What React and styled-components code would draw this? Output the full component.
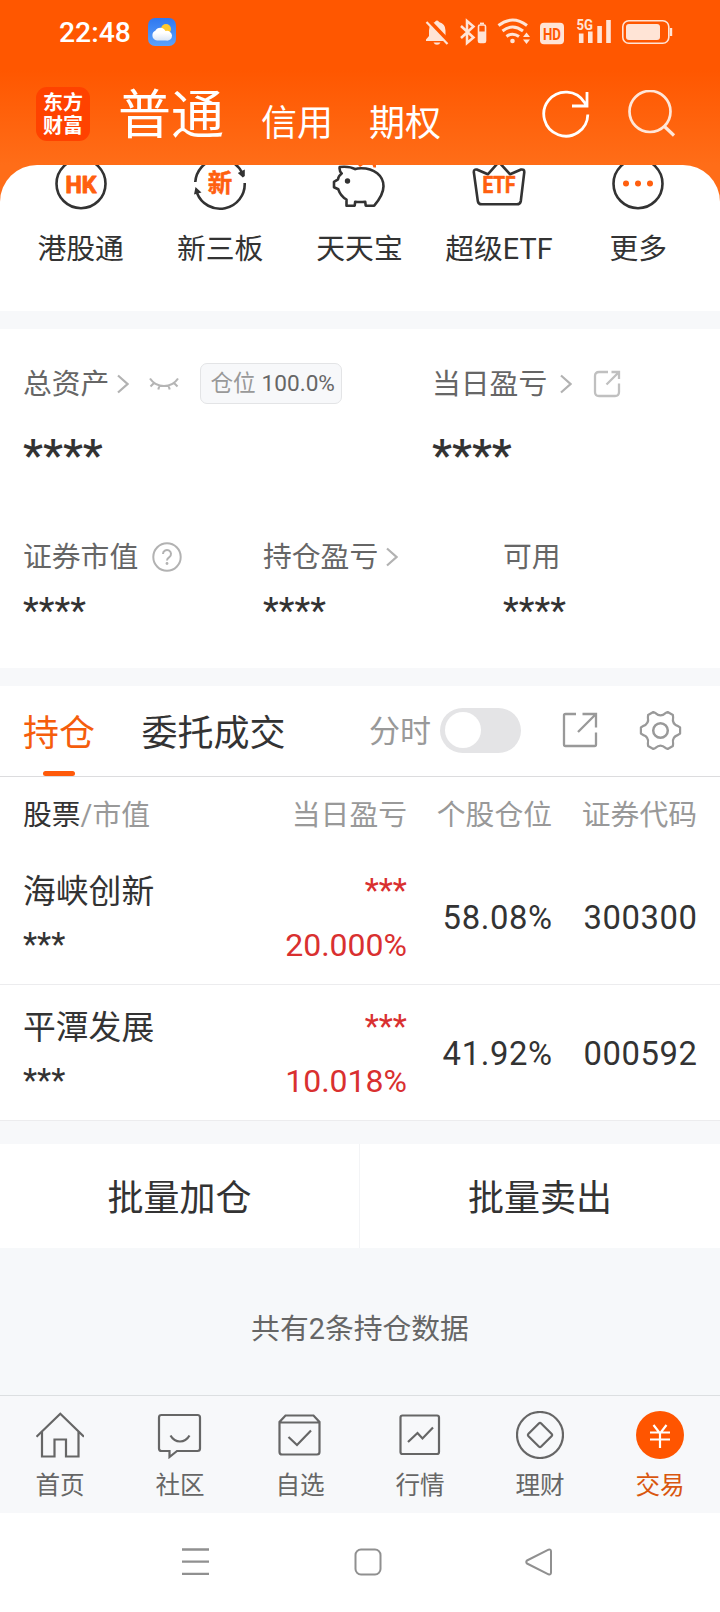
import React from "react";
import styled, { createGlobalStyle } from "styled-components";

const GlobalStyle = createGlobalStyle`
  *, *::before, *::after { box-sizing: border-box; }
  body {
    margin: 0;
    background: #fff;
    color: #333;
    font-family: Roboto, "Noto Sans CJK SC", sans-serif;
  }
  svg { display: block; flex: none; }
`;

const Screen = styled.div`
  width: 720px;
  height: 1612px;
  display: flex;
  flex-direction: column;
  overflow: hidden;
`;

/* ---------- header ---------- */

const Header = styled.header`
  height: 165px;
  flex: none;
  color: #fff;
  background: linear-gradient(#ff5700 0, #ff5700 70px, #ff6d18 165px);
`;

const StatusBar = styled.div`
  height: 64px;
  padding: 0 47px 0 59px;
  display: flex;
  align-items: center;
`;

const Clock = styled.span`
  width: 89px;
  padding-top: 1px;
  font-size: 28.3px;
  line-height: 40px;
  font-weight: 500;
`;

const StatusIcons = styled.div`
  margin-left: auto;
`;

const TitleBar = styled.div`
  height: 101px;
  padding: 0 44px 0 36px;
  display: flex;
  align-items: flex-start;
`;

const Logo = styled.div`
  width: 54px;
  height: 54px;
  margin-top: 23px;
  padding-top: 5px;
  border-radius: 11px;
  background: #ff4200;
  font-size: 20px;
  line-height: 23px;
  font-weight: 700;
  text-align: center;
`;

const AccountTab = styled.span`
  margin-left: ${(p) => p.$gap}px;
  margin-top: ${(p) => (p.$active ? 22 : 40)}px;
  font-size: ${(p) => (p.$active ? 53 : 36)}px;
  line-height: ${(p) => (p.$active ? 60 : 40)}px;
  font-weight: 400;
`;

const HeaderActions = styled.div`
  margin: 26px 0 0 auto;
  display: flex;
  gap: 37px;
`;

/* ---------- shortcuts ---------- */

const Backdrop = styled.div`
  flex: none;
  background: linear-gradient(#ff6d18 40px, #fff 40px);
`;

const Shortcuts = styled.section`
  height: 146px;
  padding: 0 12px 0 11px;
  border-radius: 37px 37px 0 0;
  overflow: hidden;
  background: #fff;
  display: grid;
  grid-template-columns: repeat(5, 1fr);
`;

const Shortcut = styled.div`
  display: flex;
  flex-direction: column;
  align-items: center;
  margin-top: -9px;
`;

const ShortcutLabel = styled.span`
  margin-top: 17px;
  font-size: 28.8px;
  line-height: 40px;
  white-space: nowrap;
`;

const Gap = styled.div`
  flex: none;
  height: ${(p) => p.$size}px;
  background: #f7f8fa;
`;

/* ---------- assets ---------- */

const Assets = styled.section`
  flex: none;
  height: 339px;
  padding: 34px 0 0 23px;
`;

const Totals = styled.div`
  display: grid;
  grid-template-columns: 409px 1fr;
  height: 173px;
`;

const Details = styled.div`
  display: grid;
  grid-template-columns: 240px 240px 1fr;
`;

const LabelLine = styled.div`
  display: flex;
  align-items: center;
  height: 41px;
  font-size: 28.8px;
  line-height: 41px;
  color: #666;
  white-space: nowrap;
`;

const Label = styled.span`
  padding-top: 2px;
`;

const Spacer = styled.span`
  flex: none;
  width: ${(p) => p.$w}px;
`;

const Masked = styled.div`
  margin-top: ${(p) => (p.$large ? 32 : 14)}px;
  font-size: ${(p) => (p.$large ? 45 : 36.5)}px;
  line-height: 40px;
  font-weight: ${(p) => (p.$large ? 500 : 400)};
  color: #333;
`;

const PositionTag = styled.span`
  width: 142px;
  height: 41px;
  padding-left: 9px;
  border: 1px solid #e3e4e6;
  border-radius: 7px;
  background: #f7f8fa;
  display: flex;
  gap: 6px;
  font-size: 22.6px;
  line-height: 40px;
  color: #999;
`;

const TagValue = styled.span`
  color: #666;
`;

/* ---------- holdings ---------- */

const Tabs = styled.nav`
  flex: none;
  height: 91px;
  padding: 0 38px 2px 23px;
  border-bottom: 1px solid #dcdcde;
  display: flex;
  align-items: center;
`;

const Tab = styled.div`
  align-self: flex-start;
  height: 90px;
  margin-right: 46.5px;
  padding-top: 28px;
  display: flex;
  flex-direction: column;
  align-items: center;
  font-size: 36px;
  line-height: 40px;
  color: ${(p) => (p.$active ? "#f55d0c" : "#333")};
  &::after {
    content: "";
    width: 32px;
    height: 5px;
    margin-top: 17px;
    border-radius: 3px;
    background: ${(p) => (p.$active ? "#ff5a0a" : "transparent")};
  }
`;

const ToggleLabel = styled.span`
  margin-left: auto;
  margin-right: 9px;
  padding-top: 4px;
  font-size: 31px;
  line-height: 40px;
  color: #999;
`;

const Toggle = styled.span`
  width: 81px;
  height: 45px;
  padding: 4.5px;
  border-radius: 23px;
  background: #e4e4e6;
  &::before {
    content: "";
    display: block;
    width: 36px;
    height: 36px;
    border-radius: 50%;
    background: #fff;
  }
`;

const tableColumns = `
  padding: 0 23px;
  display: grid;
  grid-template-columns: 1fr 160px 145px 145px;
`;

const TableHead = styled.div`
  flex: none;
  height: 72px;
  ${tableColumns}
  padding-top: 3px;
  align-items: center;
  font-size: 28.8px;
  line-height: 40px;
  color: #999;
`;

const HeadCell = styled.span`
  text-align: ${(p) => (p.$left ? "left" : "right")};
  white-space: nowrap;
`;

const Strong = styled.span`
  color: #333;
`;

const Holding = styled.div`
  flex: none;
  height: 136px;
  ${tableColumns}
  border-bottom: 1px solid #ececee;
  font-size: 32.8px;
`;

const Stack = styled.div`
  padding-top: 15px;
  line-height: 54px;
  text-align: ${(p) => (p.$rise ? "right" : "left")};
  color: ${(p) => (p.$rise ? "#d93030" : "#333")};
`;

const StockName = styled.div`
  padding-top: 1px;
  margin-bottom: -1px;
`;

const Percent = styled.div`
  font-size: 32px;
`;

const Figure = styled.div`
  line-height: 138px;
  text-align: right;
  letter-spacing: 0.6px;
  margin-right: -0.6px;
`;

const Batch = styled.div`
  flex: none;
  height: 104px;
  display: grid;
  grid-template-columns: 359px 1fr;
`;

const BatchButton = styled.div`
  border-left: ${(p) => (p.$divided ? "1px solid #f3f4f6" : "none")};
  font-size: 36px;
  line-height: 110px;
  text-align: center;
`;

const Summary = styled.div`
  flex: none;
  height: 147px;
  padding-top: 61px;
  background: #f6f8fa;
  font-size: 28.8px;
  line-height: 40px;
  text-align: center;
  color: #666;
`;

/* ---------- bottom bars ---------- */

const TabBar = styled.nav`
  flex: none;
  height: 118px;
  border-top: 1px solid #dcdfe1;
  background: #f7f8fa;
  display: grid;
  grid-template-columns: repeat(6, 1fr);
`;

const TabBarItem = styled.div`
  padding-top: 15px;
  display: flex;
  flex-direction: column;
  align-items: center;
  gap: 10px;
  font-size: 24.6px;
  line-height: 34px;
  color: ${(p) => (p.$active ? "#d9570f" : "#666")};
`;

const SystemNav = styled.div`
  flex: none;
  height: 99px;
  padding: 0 167px 2px 181px;
  display: flex;
  align-items: center;
  justify-content: space-between;
`;

/* ---------- drawings ---------- */

const WeatherIcon = () => (
  <svg width="28" height="28" viewBox="0 0 28 28">
    <defs>
      <linearGradient id="sky" x1="0" y1="0" x2="0" y2="1">
        <stop offset="0" stopColor="#2f78f0" />
        <stop offset="1" stopColor="#5aa2fb" />
      </linearGradient>
      <linearGradient id="cloud" x1="0" y1="0" x2="0" y2="1">
        <stop offset="0.4" stopColor="#fff" />
        <stop offset="1" stopColor="#dbe6f5" />
      </linearGradient>
    </defs>
    <rect width="28" height="28" rx="7" fill="url(#sky)" />
    <circle cx="18" cy="11" r="5" fill="#ffc92e" />
    <path d="M9 22.500a5 5 0 0 1-4.600-5.300a4.800 4.800 0 0 1 2.900-4.400a5.600 5.600 0 0 1 10.200 0.300a4.900 4.900 0 1 1 0.500 9.400Z" fill="url(#cloud)" />
  </svg>
);

const StatusGlyphs = () => (
  <svg width="250" height="30" viewBox="424 17 250 30" fill="none" stroke="#ffe4d6" strokeWidth="2">
    <path d="M438 20.500a2 2 0 0 1 2 1.500q6.500 1.800 6.500 8.500v6l3 4.500h-22.500v-1.500l3-3.500v-5.500q0-6.700 6-8.500a2 2 0 0 1 2-1.500Z" fill="#ffe4d6" stroke="none" />
    <path d="M434.500 42.500h7q-1 2.300-3.500 2.300t-3.500-2.300Z" fill="#ffe4d6" stroke="none" />
    <path d="M429 20L450 42" stroke="#ff5700" strokeWidth="4.500" />
    <path d="M427.500 22L448.500 44" strokeWidth="2.200" />
    <path d="M462 26l12.500 11.500l-6.500 5.500v-22l6.500 5.500l-12.500 11.500" strokeWidth="2.500" />
    <rect x="479.500" y="25" width="7" height="17.500" rx="1.500" strokeWidth="1.600" />
    <path d="M481 23.500h4" strokeWidth="1.800" />
    <path d="M479.500 31.500h7v10.500h-7Z" fill="#ffe4d6" stroke="none" />
    <path d="M499.500 25.500q14-11 28.500 0M503.500 31q10-8 20.500 0M507.500 36.500q6-4.500 12.500 0" strokeWidth="3" />
    <circle cx="513.500" cy="41" r="2.300" fill="#ffe4d6" stroke="none" />
    <path d="M524 37l3.500-4.500l3.500 4.500ZM524 39.500l3.500 4.500l3.500-4.500Z" fill="#ffe4d6" stroke="none" />
    <rect x="541" y="22.700" width="24" height="21.500" rx="4" fill="#ffe4d6" stroke="none" />
    <text x="553" y="39.500" fontSize="17" fontWeight="700" textAnchor="middle" textLength="18" lengthAdjust="spacingAndGlyphs" fill="#ff5700" stroke="none">HD</text>
    <text x="577.500" y="29.800" fontSize="14.500" fontWeight="700" textLength="16.500" lengthAdjust="spacingAndGlyphs" fill="#ffe4d6" stroke="none">5G</text>
    <path d="M582.200 33.500v9.500M591.300 31.500v11.500M600.600 26v17M609.500 20v23" strokeWidth="4.600" />
    <rect x="623.800" y="20.800" width="46" height="22.400" rx="6" strokeWidth="1.600" />
    <rect x="627" y="24" width="34" height="16" rx="3" fill="#ffe4d6" stroke="none" />
    <path d="M672 28v8" strokeWidth="2.400" />
  </svg>
);

const RefreshIcon = () => (
  <svg width="49" height="49" viewBox="0 0 49 49" fill="none" stroke="#fff" strokeWidth="2.800">
    <path d="M46.800 24.500A22 22 0 1 1 43.500 12.500L46 16M46 2v14h-15" />
  </svg>
);

const SearchIcon = () => (
  <svg width="49" height="49" viewBox="0 0 49 49" fill="none" stroke="#ffe6d8" strokeWidth="2.700">
    <circle cx="23" cy="21.500" r="20.500" />
    <path d="M37.500 36.500l9.500 9" strokeWidth="3.200" />
  </svg>
);

const shortcutIcons = {
  hk: (
    <>
      <circle cx="28" cy="27.700" r="24.500" />
      <text x="28" y="36.500" fontSize="23.500" fontWeight="700" textAnchor="middle" textLength="31" lengthAdjust="spacingAndGlyphs" fill="#ff5f0f" stroke="#ff5f0f" strokeWidth="1">HK</text>
    </>
  ),
  xin: (
    <>
      <path d="M3.300 26A24.700 24.700 0 0 1 50 16.500M52.700 27A24.700 24.700 0 0 1 5 37" />
      <path d="M45.800 17l7-3.500l0 6.500l-2 1.500ZM3.500 31l6 5.500l-7.500 2Z" fill="#333" stroke="none" />
      <text x="28" y="36.300" fontSize="24.500" fontWeight="700" textAnchor="middle" fill="#ff5f0f" stroke="#ff5f0f" strokeWidth="0.500">新</text>
    </>
  ),
  pig: (
    <>
      <path d="M8.700 11q10-1 15.500 2.200q2-1 6-1c13 0 22.300 7.500 22.300 18c0 7-3.500 12.500-9.300 19.500h-8.500l-0.500-4q-5.500 0.700-10 0l-0.500 4h-8.200v-6.200q-6-3.500-8.200-10.200l-4.300-2v-5.500l4-2.500q0.500-3.500 3.700-5.800Q8 15 8.700 11Z" />
      <circle cx="16.500" cy="25" r="2.700" fill="#333" stroke="none" />
      <path d="M27 9h5l-3 2ZM41.500 9h3.500v2.500h-2.500Z" fill="#ff5f0f" stroke="none" />
    </>
  ),
  etf: (
    <>
      <path d="M2.800 16q0-3 3-2.500l11 4.800l11-12.300l11.300 12.300l11-4.800q3.200-0.500 3.200 2.500l-3.500 29q-0.500 3.300-4 3.300h-35q-3.500 0-4-3.300Z" />
      <text x="28" y="36.500" fontSize="23" fontWeight="700" textAnchor="middle" textLength="33" lengthAdjust="spacingAndGlyphs" fill="#ff5f0f" stroke="#ff5f0f" strokeWidth="0.700">ETF</text>
    </>
  ),
  more: (
    <>
      <circle cx="28" cy="27.700" r="24.500" />
      <path d="M16 27.500h0.010M28 27.500h0.010M40 27.500h0.010" stroke="#ff5f0f" strokeWidth="6" strokeLinecap="round" />
    </>
  ),
};

const ShortcutIcon = ({ name }) => (
  <svg width="56" height="56" viewBox="0 0 56 56" fill="none" stroke="#333" strokeWidth="2.600" strokeLinejoin="round">
    {shortcutIcons[name]}
  </svg>
);

const Chevron = () => (
  <svg width="12" height="20" viewBox="0 0 12 20" fill="none" stroke="#b2b2b2" strokeWidth="2.200">
    <path d="M1 1.500l9.500 8.500l-9.500 8.500" />
  </svg>
);

const ClosedEye = () => (
  <svg width="30" height="16" viewBox="0 0 30 16" fill="none" stroke="#b5b5b5" strokeWidth="2.100">
    <path d="M1 2.500q5 7.500 14 7.500t14-7.500M5.500 6.500l-4 4M10.500 9.500l-1.200 4M19.500 9.500l1.200 4M24.500 6.500l4 4" />
  </svg>
);

const ShareIcon = ({ size, rounded }) => (
  <svg width={size} height={size} viewBox={`0 0 ${size} ${size}`} fill="none" stroke={rounded ? "#c0c0c0" : "#999"} strokeWidth="2.300">
    {rounded ? (
      <path d="M15 2h-9q-4 0-4 4v16q0 4 4 4h16q4 0 4-4v-8.500M18.500 2h7.500v7M26 2l-12.500 12.500" />
    ) : (
      <path d="M16 3h-10.500q-1.500 0-1.500 1.500v29q0 1.500 1.500 1.500h29q1.500 0 1.500-1.500v-12M22.500 3h13.500v13.500M36 3l-18 18" />
    )}
  </svg>
);

const HelpIcon = () => (
  <svg width="30" height="30" viewBox="0 0 30 30" fill="none" stroke="#b2b2b2" strokeWidth="2">
    <circle cx="15" cy="15" r="13.700" />
    <path d="M11 12a4 4 0 1 1 6.300 3.200q-2.300 1.500-2.300 3.300" />
    <circle cx="15" cy="21.500" r="1.400" fill="#b2b2b2" stroke="none" />
  </svg>
);

/* Six flat teeth joined by concave notches. */
const rotate = (x, y, turn) => {
  const a = (turn * Math.PI) / 3;
  const px = x * Math.cos(a) - y * Math.sin(a);
  const py = x * Math.sin(a) + y * Math.cos(a);
  return `${px.toFixed(2)} ${py.toFixed(2)}`;
};

const gearOutline =
  [0, 1, 2, 3, 4, 5]
    .map(
      (k) =>
        `${k ? "L" : "M"}${rotate(19.6, -3, k)}L${rotate(19.6, 3, k)}` +
        `L${rotate(17.6, 4.4, k)}Q${rotate(11.2, 6.5, k)} ${rotate(12.6, 13.05, k)}`
    )
    .join("") + "Z";

const GearIcon = () => (
  <svg width="43" height="43" viewBox="-21.500 -21.500 43 43" fill="none" stroke="#999" strokeWidth="2.200" strokeLinejoin="round">
    <path d={gearOutline} />
    <circle r="7.300" strokeWidth="2.500" />
  </svg>
);

const tabIcons = {
  home: <path d="M0.500 25.800L24.300 2.800L48 25.800M6 21v24.500h12.500v-17h11.500v17h12.500v-24.500" />,
  community: (
    <path d="M5.500 4h36q2.500 0 2.500 2.500v31q0 2.500-2.500 2.500h-20.500l-7.500 6v-6h-8q-2.500 0-2.500-2.500v-31q0-2.500 2.500-2.500ZM14.500 24.500q3.500 6 9.500 6t9.500-6" />
  ),
  watch: (
    <path d="M9.500 4.500h28l6 6.500v30q0 2.500-2.500 2.500h-35q-2.500 0-2.500-2.500v-30ZM3.500 11.500h40M12.500 26l8.500 8l14-14.500" />
  ),
  market: (
    <>
      <rect x="4.500" y="4.500" width="38.500" height="38.500" rx="2" />
      <path d="M12 31l9.500-9l5 5.500l10.500-11" />
    </>
  ),
  wealth: (
    <>
      <circle cx="24" cy="24" r="23" />
      <path d="M22.800 12.500q1.200-1.200 2.400 0l10.300 10.300q1.200 1.200 0 2.400l-10.300 10.300q-1.200 1.200-2.400 0l-10.300-10.300q-1.200-1.200 0-2.400Z" />
    </>
  ),
  trade: (
    <>
      <circle cx="24" cy="24" r="24" fill="#ff5500" stroke="none" />
      <path d="M17.500 14l6.500 8.500l6.500-8.500M14 21.500h20M14 28.500h20M24 22v15" stroke="#fff" />
    </>
  ),
};

const TabIcon = ({ name }) => (
  <svg width="48" height="48" viewBox="0 0 48 48" fill="none" stroke="#666" strokeWidth="2.200">
    {tabIcons[name]}
  </svg>
);

const MenuKey = () => (
  <svg width="29" height="29" viewBox="0 0 29 29" stroke="#909090" strokeWidth="2.300">
    <path d="M1 2.500h27M1 14.700h27M1 26.800h27" />
  </svg>
);

const HomeKey = () => (
  <svg width="28" height="28" viewBox="0 0 28 28" fill="none" stroke="#909090" strokeWidth="2">
    <rect x="1.500" y="1.500" width="25" height="25" rx="5.500" />
  </svg>
);

const BackKey = () => (
  <svg width="28" height="28" viewBox="0 0 28 28" fill="none" stroke="#909090" strokeWidth="2" strokeLinejoin="round">
    <path d="M2 12.500L23.500 1.700q2.500-0.700 2.500 1.800v21q0 2.500-2.500 1.800L2 15.500q-1.500-1.500 0-3Z" />
  </svg>
);

/* ---------- data ---------- */

const shortcuts = [
  ["hk", "港股通"],
  ["xin", "新三板"],
  ["pig", "天天宝"],
  ["etf", "超级ETF"],
  ["more", "更多"],
];

const holdings = [
  { name: "海峡创新", rise: "20.000%", share: "58.08%", code: "300300" },
  { name: "平潭发展", rise: "10.018%", share: "41.92%", code: "000592" },
];

const tabBar = [
  ["home", "首页"],
  ["community", "社区"],
  ["watch", "自选"],
  ["market", "行情"],
  ["wealth", "理财"],
  ["trade", "交易"],
];

export default function App() {
  return (
    <Screen>
      <GlobalStyle />
      <Header>
        <StatusBar>
          <Clock>22:48</Clock>
          <WeatherIcon />
          <StatusIcons>
            <StatusGlyphs />
          </StatusIcons>
        </StatusBar>
        <TitleBar>
          <Logo>
            东方
            <br />
            财富
          </Logo>
          <AccountTab $active $gap={28}>普通</AccountTab>
          <AccountTab $gap={37}>信用</AccountTab>
          <AccountTab $gap={36}>期权</AccountTab>
          <HeaderActions>
            <RefreshIcon />
            <SearchIcon />
          </HeaderActions>
        </TitleBar>
      </Header>

      <Backdrop>
        <Shortcuts>
          {shortcuts.map(([icon, label]) => (
            <Shortcut key={icon}>
              <ShortcutIcon name={icon} />
              <ShortcutLabel>{label}</ShortcutLabel>
            </Shortcut>
          ))}
        </Shortcuts>
      </Backdrop>
      <Gap $size={18} />

      <Assets>
        <Totals>
          <div>
            <LabelLine>
              <Label>总资产</Label>
              <Spacer $w={8} />
              <Chevron />
              <Spacer $w={20} />
              <ClosedEye />
              <Spacer $w={21} />
              <PositionTag>
                仓位<TagValue>100.0%</TagValue>
              </PositionTag>
            </LabelLine>
            <Masked $large>****</Masked>
          </div>
          <div>
            <LabelLine>
              <Label>当日盈亏</Label>
              <Spacer $w={13} />
              <Chevron />
              <Spacer $w={21} />
              <ShareIcon size={28} rounded />
            </LabelLine>
            <Masked $large>****</Masked>
          </div>
        </Totals>
        <Details>
          <div>
            <LabelLine>
              <Label>证券市值</Label>
              <Spacer $w={14} />
              <HelpIcon />
            </LabelLine>
            <Masked>****</Masked>
          </div>
          <div>
            <LabelLine>
              <Label>持仓盈亏</Label>
              <Spacer $w={8} />
              <Chevron />
            </LabelLine>
            <Masked>****</Masked>
          </div>
          <div>
            <LabelLine>
              <Label>可用</Label>
            </LabelLine>
            <Masked>****</Masked>
          </div>
        </Details>
      </Assets>
      <Gap $size={18} />

      <Tabs>
        <Tab $active>持仓</Tab>
        <Tab>委托成交</Tab>
        <ToggleLabel>分时</ToggleLabel>
        <Toggle />
        <Spacer $w={39} />
        <ShareIcon size={38} />
        <Spacer $w={41} />
        <GearIcon />
      </Tabs>
      <TableHead>
        <HeadCell $left>
          <Strong>股票</Strong>/市值
        </HeadCell>
        <HeadCell>当日盈亏</HeadCell>
        <HeadCell>个股仓位</HeadCell>
        <HeadCell>证券代码</HeadCell>
      </TableHead>
      {holdings.map((h) => (
        <Holding key={h.code}>
          <Stack>
            <StockName>{h.name}</StockName>
            <div>***</div>
          </Stack>
          <Stack $rise>
            <div>***</div>
            <Percent>{h.rise}</Percent>
          </Stack>
          <Figure>{h.share}</Figure>
          <Figure>{h.code}</Figure>
        </Holding>
      ))}
      <Gap $size={23} />
      <Batch>
        <BatchButton>批量加仓</BatchButton>
        <BatchButton $divided>批量卖出</BatchButton>
      </Batch>
      <Summary>共有2条持仓数据</Summary>

      <TabBar>
        {tabBar.map(([icon, label]) => (
          <TabBarItem key={icon} $active={icon === "trade"}>
            <TabIcon name={icon} />
            {label}
          </TabBarItem>
        ))}
      </TabBar>
      <SystemNav>
        <MenuKey />
        <HomeKey />
        <BackKey />
      </SystemNav>
    </Screen>
  );
}
